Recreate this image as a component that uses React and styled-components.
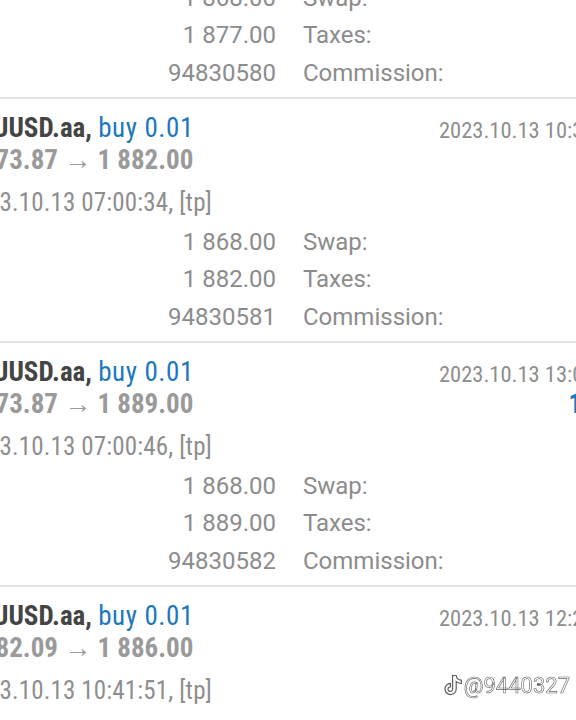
import React from "react";
import styled, { createGlobalStyle } from "styled-components";

const Global = createGlobalStyle`
  html, body {
    margin: 0;
    background: #fff;
    overflow: hidden;
  }
`;

const trades = [
  {
    id: "94830580",
    price: "1 873.87 → 1 877.00",
    opened: "2023.10.13 07:00:21, [tp]",
    closed: "2023.10.13 10:12:40",
    profit: "3.13",
    sl: "1 868.00",
    tp: "1 877.00"
  },
  {
    id: "94830581",
    price: "1 873.87 → 1 882.00",
    opened: "2023.10.13 07:00:34, [tp]",
    closed: "2023.10.13 10:35:08",
    profit: "8.13",
    sl: "1 868.00",
    tp: "1 882.00"
  },
  {
    id: "94830582",
    price: "1 873.87 → 1 889.00",
    opened: "2023.10.13 07:00:46, [tp]",
    closed: "2023.10.13 13:02:17",
    profit: "15.13",
    sl: "1 868.00",
    tp: "1 889.00"
  },
  {
    id: "94830583",
    price: "1 882.09 → 1 886.00",
    opened: "2023.10.13 10:41:51, [tp]",
    closed: "2023.10.13 12:24:55",
    profit: "3.91",
    sl: "1 876.00",
    tp: "1 886.00"
  }
];

const List = styled.div`
  margin: -147px 0 0 -38px;
  width: 672px;
`;

const Trade = styled.div`
  box-sizing: border-box;
  height: 244px;
  overflow: hidden;
  border-top: 2px solid #e4e4e4;
  padding-top: 13px;
  font-family: Roboto, "Noto Sans", sans-serif;
`;

const Head = styled.div`
  display: grid;
  grid-template-columns: 1fr auto;
  font-stretch: 75%;
`;

const Line = styled.div`
  font-size: 27px;
  line-height: 32px;
  white-space: nowrap;
  font-weight: ${(p) => (p.$bold ? 700 : 400)};
  color: ${(p) => p.$color || "#444"};
`;

const Symbol = styled.span`
  font-weight: 700;
  color: #444;
`;

const Order = styled.span`
  color: #1c78bd;
  letter-spacing: 0.6px;
`;

const Side = styled.div`
  text-align: right;
`;

const Profit = styled(Line)`
  letter-spacing: 0.6px;
`;

const Closed = styled.div`
  font-size: 22.5px;
  line-height: 32px;
  padding: 2px 12px 0 0;
  height: 30px;
  color: #8e8e8e;
  white-space: nowrap;
`;

const Opened = styled.div`
  font-stretch: 75%;
  font-size: 25px;
  letter-spacing: 0.15px;
  line-height: 32px;
  margin-top: 11px;
  color: #8e8e8e;
  white-space: nowrap;
`;

const Details = styled.div`
  display: grid;
  grid-template-columns: 100px 205px auto 1fr;
  column-gap: 27px;
  margin: 4.5px 0 0 -18px;
  font-size: 24px;
  line-height: 37.5px;
  color: #8c8c8c;
  white-space: nowrap;
`;

const Value = styled.div`
  text-align: right;
`;

const Watermark = styled.div`
  position: fixed;
  right: 6px;
  bottom: 22px;
  display: flex;
  align-items: center;
  gap: 1px;
  font-family: Roboto, sans-serif;
  font-size: 22px;
  color: #fff;
  -webkit-text-stroke: 0.6px #6a6a6a;
  text-shadow: 0 0 1px rgba(0, 0, 0, 0.15);
`;

function NoteIcon() {
  return (
    <svg width="19" height="23" viewBox="0 0 19 22" fill="#fff" stroke="#5e5e5e" strokeWidth="1.2">
      <path d="M8.6 1H12.2C12.5 3.7 14.5 5.5 17.4 5.7V9C15.4 9 13.6 8.3 12.2 7.1V14.5A5.6 5.6 0 1 1 6.4 8.9V12.3A2.3 2.3 0 1 0 8.6 14.5Z" />
    </svg>
  );
}

function TradeItem({ t }) {
  return (
    <Trade>
      <Head>
        <div>
          <Line>
            <Symbol>XAUUSD.aa, </Symbol>
            <Order>buy 0.01</Order>
          </Line>
          <Line $bold $color="#9a9a9a">
            {t.price}
          </Line>
        </div>
        <Side>
          <Closed>{t.closed}</Closed>
          <Profit $bold $color="#1c78bd">
            {t.profit}
          </Profit>
        </Side>
      </Head>
      <Opened>{t.opened}</Opened>
      <Details>
        <div>S / L:</div>
        <Value>{t.sl}</Value>
        <div>Swap:</div>
        <Value>0.00</Value>
        <div>T / P:</div>
        <Value>{t.tp}</Value>
        <div>Taxes:</div>
        <Value>0.00</Value>
        <div>ID:</div>
        <Value>{t.id}</Value>
        <div>Commission:</div>
        <Value>0.00</Value>
      </Details>
    </Trade>
  );
}

export default function App() {
  return (
    <>
      <Global />
      <List>
        {trades.map((t) => (
          <TradeItem key={t.id} t={t} />
        ))}
      </List>
      <Watermark>
        <NoteIcon />
        <span>@9440327</span>
      </Watermark>
    </>
  );
}
